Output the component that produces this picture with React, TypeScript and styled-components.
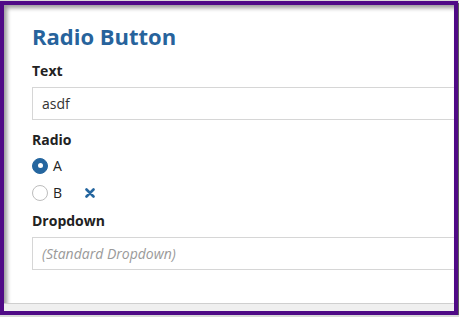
import React from "react";
import styled, { createGlobalStyle } from "styled-components";

const Global = createGlobalStyle`
  html, body { margin: 0; padding: 0; background: #d9d9d9; }
  body { font-family: "Open Sans", "Liberation Sans", sans-serif; }
  * { box-sizing: border-box; }
`;

const Window = styled.div`
  margin-top: 1px;
  width: 458px;
  height: 314px;
  border: 4px solid #4f0a86;
  background: #fff;
  box-shadow: 1px 2px 0 #5c5c5c, inset 3px 3px 4px rgba(0, 0, 0, 0.4);
  display: flex;
  flex-direction: column;
  overflow: hidden;
`;

const Content = styled.div`
  flex: 1;
  padding: 17px 0 0 28px;
  display: flex;
  flex-direction: column;
`;

const Title = styled.h1`
  margin: 0;
  font-size: 22px;
  line-height: 28px;
  font-weight: 700;
  color: #27639c;
`;

const Label = styled.div<{ $top: number }>`
  margin-top: ${(p) => p.$top}px;
  font-size: 14px;
  line-height: 20px;
  font-weight: 700;
  color: #222;
`;

const Box = styled.div`
  margin-top: 6px;
  width: 520px;
  height: 33px;
  border: 1px solid #d6d6d6;
  padding: 0 9px;
  display: flex;
  align-items: center;
  font-size: 14px;
  color: #333;
`;

const Placeholder = styled.span`
  font-style: italic;
  color: #9a9a9a;
`;

const RadioGroup = styled.div`
  margin-top: 2px;
  display: flex;
  flex-direction: column;
`;

const RadioRow = styled.div`
  height: 27px;
  display: flex;
  align-items: center;
  font-size: 14px;
  color: #222;
`;

const Circle = styled.span<{ $checked: boolean }>`
  width: 16px;
  height: 16px;
  border-radius: 50%;
  margin-right: 5px;
  display: flex;
  align-items: center;
  justify-content: center;
  background: ${(p) => (p.$checked ? "#25669f" : "#fff")};
  border: 1px solid ${(p) => (p.$checked ? "#25669f" : "#bdbdbd")};
  &::after {
    content: "";
    display: ${(p) => (p.$checked ? "block" : "none")};
    width: 5px;
    height: 5px;
    border-radius: 50%;
    background: #fff;
  }
`;

const Clear = styled.svg`
  margin-left: 23px;
  width: 10px;
  height: 10px;
`;

const Footer = styled.div`
  height: 8px;
  background: #efefef;
  border-top: 1px solid #cfcfcf;
`;

export default function App() {
  return (
    <>
      <Global />
      <Window>
        <Content>
          <Title>Radio Button</Title>
          <Label $top={11}>Text</Label>
          <Box>asdf</Box>
          <Label $top={10}>Radio</Label>
          <RadioGroup>
            <RadioRow>
              <Circle $checked />A
            </RadioRow>
            <RadioRow>
              <Circle $checked={false} />B
              <Clear viewBox="0 0 10 10">
                <path d="M1.5 1.5 L8.5 8.5 M8.5 1.5 L1.5 8.5" stroke="#25669f" strokeWidth="2.6" strokeLinecap="round" />
              </Clear>
            </RadioRow>
          </RadioGroup>
          <Label $top={5}>Dropdown</Label>
          <Box>
            <Placeholder>(Standard Dropdown)</Placeholder>
          </Box>
        </Content>
        <Footer />
      </Window>
    </>
  );
}
